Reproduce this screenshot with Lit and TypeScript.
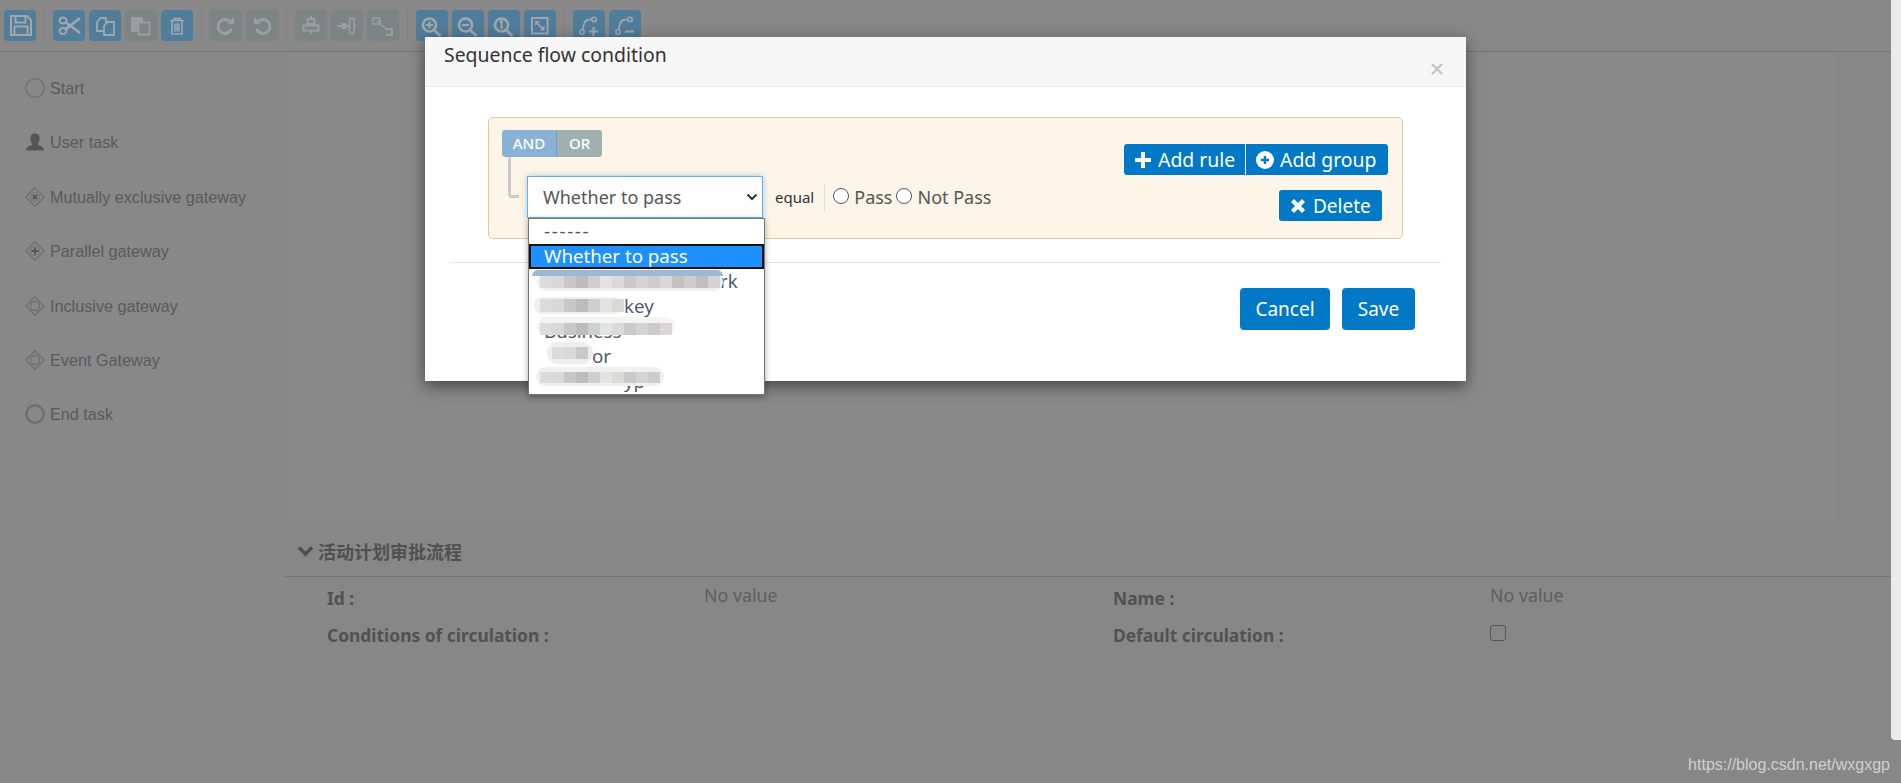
import { LitElement, html, css, svg } from "lit";
import { customElement } from "lit/decorators.js";

const lens = svg`<circle cx="13.500" cy="15" r="6.500" fill="none" stroke="currentColor" stroke-width="2.600"/><path d="M18.500 20.500l6 5.500" stroke="currentColor" stroke-width="3"/>`;
const nodes = svg`<circle cx="9" cy="22" r="2.200" fill="none" stroke="currentColor" stroke-width="1.600"/><circle cx="21" cy="9.500" r="2.200" fill="none" stroke="currentColor" stroke-width="1.600"/><path d="M9.500 19.800l1.500-5.800q.7-3.600 4-4.200l3.800-.3" fill="none" stroke="currentColor" stroke-width="1.700"/>`;
const ic: Record<string, unknown> = {
  save: svg`<path d="M7 6h16l4 4v15H7z" fill="none" stroke="currentColor" stroke-width="2"/><path d="M11.500 6v6.500h10V6M10.500 25v-8.500h13V25" fill="none" stroke="currentColor" stroke-width="2"/>`,
  cut: svg`<ellipse cx="10" cy="10.500" rx="3.500" ry="3" fill="none" stroke="currentColor" stroke-width="2"/><ellipse cx="10" cy="21" rx="3.500" ry="3" fill="none" stroke="currentColor" stroke-width="2"/><path d="M13 12.500l14 10.500M13 19l14-11" stroke="currentColor" stroke-width="2.800"/>`,
  copy: svg`<path d="M8 12l3.500-4H17v5M8 12v9h6" fill="none" stroke="currentColor" stroke-width="1.800"/><path d="M15 16l3.500-4H25v13H15z" fill="none" stroke="currentColor" stroke-width="1.800"/>`,
  paste: svg`<path d="M6 7h12v15H6z" fill="currentColor"/><path d="M13.500 12.500h11v12h-11z" fill="#7c8485" stroke="currentColor" stroke-width="1.800"/>`,
  trash: svg`<path d="M9.500 10.500h13M13 10.500V8.500h6v2M11 10.500V24h10V10.500M14 13.500v8M16 13.500v8M18 13.500v8" fill="none" stroke="currentColor" stroke-width="1.600"/>`,
  redo: svg`<path d="M21.500 19a7 7 0 1 1-1.500-7.500" fill="none" stroke="currentColor" stroke-width="3"/><path d="M17 14h7V7z" fill="currentColor"/>`,
  undo: svg`<path d="M10.500 19a7 7 0 1 0 1.500-7.500" fill="none" stroke="currentColor" stroke-width="3"/><path d="M15 14H8V7z" fill="currentColor"/>`,
  alignv: svg`<path d="M16 6v18" stroke="currentColor" stroke-width="2"/><path d="M12.500 9h7v5h-7zM8.500 15.500h15v5h-15z" fill="#7c8485" stroke="currentColor" stroke-width="2"/>`,
  alignh: svg`<path d="M6 16h19" stroke="currentColor" stroke-width="2"/><path d="M10.500 13h5v6h-5z" fill="currentColor"/><path d="M18.500 8.500h4.500v15h-4.500z" fill="#7c8485" stroke="currentColor" stroke-width="1.600"/>`,
  size: svg`<path d="M6 8h6.500v6H6z" fill="none" stroke="currentColor" stroke-width="1.600"/><path d="M19 19h6v6h-6" fill="none" stroke="currentColor" stroke-width="2"/><path d="M12 13l8 7M9.500 11.500l4 0-1.500 3.500" fill="none" stroke="currentColor" stroke-width="1.500"/>`,
  zin: svg`${lens}<path d="M10 15h7M13.500 11.500v7" stroke="currentColor" stroke-width="2.200"/>`,
  zout: svg`${lens}<path d="M10 15h7" stroke="currentColor" stroke-width="2.200"/>`,
  zone: svg`${lens}<path d="M11.500 12.500l2.200-1.300V19" fill="none" stroke="currentColor" stroke-width="2"/>`,
  fit: svg`<path d="M8 8h15.500v15.500H8z" fill="none" stroke="currentColor" stroke-width="2"/><path d="M13 13l6 6" stroke="currentColor" stroke-width="1.600"/><path d="M11 11h5l-5 5zM20.500 20.500h-5l5-5z" fill="currentColor"/>`,
  addp: svg`${nodes}<path d="M16 21.500h9M20.500 17v9" stroke="currentColor" stroke-width="2.200"/>`,
  delp: svg`${nodes}<path d="M16 21.500h9" stroke="currentColor" stroke-width="2.200"/>`,
};

type Tool = [string, boolean];
const groups: Tool[][] = [
  [["save", true]],
  [["cut", true], ["copy", true], ["paste", false], ["trash", true]],
  [["redo", false], ["undo", false]],
  [["alignv", false], ["alignh", false], ["size", false]],
  [["zin", true], ["zout", true], ["zone", true], ["fit", true]],
  [["addp", true], ["delp", true]],
];

const diamond = (inner: unknown) => svg`<path d="M10 .8l9.200 9.200-9.200 9.200L.8 10z" fill="none" stroke="currentColor" stroke-width="1.200"/>${inner}`;
const palette: [string, unknown][] = [
  ["Start", svg`<circle cx="10" cy="10" r="9.200" fill="none" stroke="currentColor" stroke-width="1.100"/>`],
  ["User task", svg`<path d="M1.200 18.500c0-3 1-4 5.800-5.500v-1.500C5.500 10 5.500 7.500 5.500 5.500 5.500 3 7.500 1.500 10 1.500s4.500 1.500 4.500 4c0 2 0 4.500-1.500 6V13c4.800 1.500 5.800 2.500 5.800 5.500z" fill="#555"/>`],
  ["Mutually exclusive gateway", diamond(svg`<circle cx="10" cy="10" r="4.600" fill="none" stroke="currentColor" stroke-width=".8"/><path d="M8 8l4 4M12 8l-4 4" stroke="#555" stroke-width="1.800"/>`)],
  ["Parallel gateway", diamond(svg`<circle cx="10" cy="10" r="4.600" fill="none" stroke="currentColor" stroke-width=".8"/><path d="M6.500 10h7M10 6.500v7" stroke="#555" stroke-width="1.800"/>`)],
  ["Inclusive gateway", diamond(svg`<circle cx="10" cy="10" r="4.500" fill="none" stroke="currentColor" stroke-width="1.300"/>`)],
  ["Event Gateway", diamond(svg`<circle cx="10" cy="10" r="4.500" fill="none" stroke="currentColor" stroke-width="1.300"/>`)],
  ["End task", svg`<circle cx="10" cy="10" r="8.700" fill="none" stroke="currentColor" stroke-width="2.400"/>`],
];

const mosaics = [
  { l: 11, t: 57, n: 15, h: 12, strip: true, halo: "0 0 0 3px #f0f0f0" },
  { l: 11, t: 80, n: 7, h: 13, strip: false, halo: "-4px 0 0 2px #f0f0f0" },
  { l: 11, t: 104, n: 11, h: 12, strip: false, halo: "0 -3px 0 3px #f4f4f4" },
  { l: 23, t: 128, n: 3, h: 12, strip: false, halo: "0 0 0 5px #eeeeee" },
  { l: 11, t: 153, n: 10, h: 11, strip: false, halo: "0 -1px 0 4px #f0f0f0" },
];
const shades = ["#dcdcdc", "#d9d9d7", "#c9c8c8", "#bdbcbd", "#cfcfce", "#e2e4e4", "#dcdad8", "#cbc9ca", "#d3d4d4", "#cccdcb", "#d9d7d7", "#c2c2c0", "#cdcdcc", "#c0bfbf", "#d3d3d5"];

@customElement("app-root")
export class AppRoot extends LitElement {
  static styles = css`
    :host { display: block; position: relative; width: 1901px; height: 783px; overflow: hidden; background: #888; color: #555;
      font-family: "Noto Sans", "Noto Sans CJK SC", sans-serif; }
    .page { display: flex; height: 783px; }
    .content { flex: 1; min-width: 0; display: flex; flex-direction: column; }
    .scroll { width: 10px; flex: none; height: 740px; background: #ebebeb; border-bottom-left-radius: 4px; }
    .toolbar { height: 52px; flex: none; box-sizing: border-box; border-bottom: 1px solid #757575; padding: 10px 0 0 4px; display: flex; align-items: flex-start; }
    .group { display: flex; gap: 4px; }
    .sep { width: 1px; height: 30px; background: #7f7f7f; margin: 0 8px; }
    .tool { width: 32px; height: 31px; border-radius: 4px; display: flex; background: #507d9b; color: #a0a8ad; }
    .tool.off { background: #7c8485; color: #9a9e9e; }
    .tool svg { width: 32px; height: 31px; }
    .body { flex: 1; display: flex; min-height: 0; }
    .side { width: 285px; flex: none; box-sizing: border-box; border-right: 1px solid #858585; padding-top: 24px; font: 16.200px "Liberation Sans", Arial, sans-serif; }
    .pal { height: 54.400px; display: flex; align-items: flex-start; gap: 5px; padding-left: 25px; line-height: 20px; color: #5a5a5a; }
    .pal span { margin-top: 2px; }
    .pal svg { width: 20px; height: 20px; color: #6e6e6e; margin-top: 2px; flex: none; }
    .main { flex: 1; display: flex; flex-direction: column; }
    .canvas { height: 474px; flex: none; width: 1554px; box-sizing: border-box; border-right: 1px solid #848484; background: #898989; }
    .panel { flex: 1; background: #878787; }
    .panel-head { height: 51px; box-sizing: border-box; border-bottom: 1px solid #757575; display: flex; align-items: center; gap: 4px; padding: 0 0 0 12px; font-size: 18px; font-weight: 700; color: #505050; }
    .panel-head svg { width: 17px; height: 12px; }
    .fields { display: grid; grid-template-columns: 377px 409px 377px 1fr; grid-auto-rows: 38px; padding: 2px 0 0 42px; line-height: 38px; }
    .lab { font-weight: 700; color: #525252; font-size: 17.400px; }
    .lab.second { margin-top: -1px; }
    .val { color: #5e5e5e; font-size: 17.800px; margin-top: -3px; }
    .check { width: 14px; height: 14px; border: 1px solid #555; border-radius: 3px; margin-top: 8px; }
    .mark { position: absolute; right: 11px; top: 756px; font: 16px "Liberation Sans", Arial, sans-serif; color: #d0d0d0; line-height: 18px; }

    .modal { position: absolute; left: 425px; top: 37px; width: 1041px; height: 344px; background: #fff; box-shadow: 0 5px 15px rgba(0,0,0,.5); display: flex; flex-direction: column; color: #555; }
    .m-head { height: 50px; flex: none; box-sizing: border-box; background: #f7f7f7; border-bottom: 1px solid #e3edf9; display: flex; justify-content: space-between; padding: 4px 22px 0 19px; font-size: 19.400px; color: #333; line-height: 28px; }
    .close { width: 14px; height: 14px; margin-top: 21px; color: #c4c4c4; }
    .m-body { flex: 1; padding: 30px 63px 0; }
    .rules { height: 122px; box-sizing: border-box; background: #fdf5e7; border: 1px solid #dfcb97; border-radius: 5px; display: flex; justify-content: space-between; padding: 12px 14px 0 13px; }
    .left { position: relative; display: flex; flex-direction: column; }
    .seg { display: flex; width: 100px; height: 27px; border-radius: 3px; overflow: hidden; color: #fff; font-size: 15px; font-weight: 500; line-height: 27px; text-align: center; }
    .and { width: 55px; background: #89b2d6; border-right: 1px solid #6fa0cb; box-sizing: border-box; }
    .or { flex: 1; background: #9eb1b0; }
    .link { position: absolute; left: 6px; top: 27px; width: 11px; height: 41px; box-sizing: border-box; border-left: 3px solid #ccc; border-bottom: 3px solid #ccc; border-bottom-left-radius: 4px; }
    .cond { display: flex; align-items: center; margin: 19px 0 0 25px; height: 42px; }
    .select { width: 236px; height: 42px; box-sizing: border-box; border: 1px solid #66afe9; box-shadow: 0 0 6px rgba(102,175,233,.6); display: flex; align-items: center; justify-content: space-between; padding: 0 4px 0 15px; font-size: 18px; color: #555; background: #fff; }
    .select svg { width: 12px; height: 8px; }
    .op { font-size: 15px; color: #333; margin-left: 12px; }
    .vsep { width: 1px; height: 27px; background: #ddd; margin: 0 8px 0 10px; }
    .radio { width: 14px; height: 14px; border: 1px solid #555; border-radius: 50%; flex: none; background: #fff; margin-top: -2px; }
    .rl { font-size: 18px; margin: 0 4px 0 5px; color: #555; }
    .actions { display: flex; flex-direction: column; align-items: flex-end; }
    .btns { display: flex; margin-top: 14px; }
    .btn { display: flex; align-items: center; gap: 6px; height: 31px; box-sizing: border-box; background: #0279c6; color: #fff; font-size: 19.400px; padding: 0 0 0 10px; border-radius: 3px; white-space: nowrap; }
    .btn svg { width: 18px; height: 18px; flex: none; }
    .btns .btn:first-child { width: 121px; border-radius: 3px 0 0 3px; }
    .btns .btn:last-child { width: 142px; margin-left: 1px; border-radius: 0 3px 3px 0; }
    .del { width: 103px; margin: 15px 6px 0 0; font-size: 19px; }
    .hr { height: 1px; background: #e5e5e5; margin: 23px -38px 0 -38px; }
    .foot { display: flex; justify-content: flex-end; gap: 12px; margin: 25px -12px 0 0; }
    .fbtn { height: 42px; border-radius: 4px; background: #0279c6; color: #fff; font-size: 19px; display: flex; align-items: center; justify-content: center; }
    .cancel { width: 90px; } .savebtn { width: 73px; }

    .drop { position: absolute; left: 528px; top: 218px; width: 237px; height: 177px; box-sizing: border-box; background: #fff; border: 1px solid #767676; box-shadow: 0 2px 6px rgba(0,0,0,.35); font-size: 18.700px; color: #4d5a6b; z-index: 2; overflow: hidden; }
    .opt { height: 25px; line-height: 23px; padding-left: 15px; white-space: nowrap; }
    .opt.dash { letter-spacing: 1.700px; color: #555; }
    .opt.sel { background: #1e90ff; color: #fff; outline: 2px solid #111; outline-offset: -2px; }
    .tail-rk { padding-left: 176px; }
    .tail-key { padding-left: 80px; }
    .tail-or { padding-left: 48px; }
    .blur { position: absolute; display: flex; border-radius: 6px; }
    .blur i { display: block; width: 12px; }
    .strip { position: absolute; left: -8px; top: -6px; height: 6px; width: 191px; background: #9db8d5; border-radius: 6px 6px 0 0; }
  `;

  render() {
    return html`
      <div class="page">
        <div class="content">
          <div class="toolbar">
            ${groups.map((g, i) => html`
              ${i ? html`<div class="sep"></div>` : ""}
              <div class="group">${g.map(([n, on]) => html`<div class="tool ${on ? "" : "off"}"><svg viewBox="0 0 32 31">${ic[n]}</svg></div>`)}</div>
            `)}
          </div>
          <div class="body">
            <div class="side">
              ${palette.map(([t, s]) => html`<div class="pal"><svg viewBox="0 0 20 20">${s}</svg><span>${t}</span></div>`)}
            </div>
            <div class="main">
              <div class="canvas"></div>
              <div class="panel">
                <div class="panel-head"><svg viewBox="0 0 17 12"><path d="M2 2.500l6.500 6.500L15 2.500" fill="none" stroke="currentColor" stroke-width="3.500"/></svg>活动计划审批流程</div>
                <div class="fields">
                  <div class="lab">Id :</div><div class="val">No value</div><div class="lab">Name :</div><div class="val">No value</div>
                  <div class="lab second">Conditions of circulation :</div><div></div><div class="lab second">Default circulation :</div><div><div class="check"></div></div>
                </div>
              </div>
            </div>
          </div>
        </div>
        <div class="scroll"></div>
      </div>
      <div class="mark">https://blog.csdn.net/wxgxgp</div>
      <div class="modal">
        <div class="m-head"><span>Sequence flow condition</span>
          <svg class="close" viewBox="0 0 14 14"><path d="M2 2l10 10M12 2L2 12" stroke="currentColor" stroke-width="2.400"/></svg></div>
        <div class="m-body">
          <div class="rules">
            <div class="left">
              <div class="seg"><span class="and">AND</span><span class="or">OR</span></div>
              <div class="link"></div>
              <div class="cond">
                <div class="select"><span>Whether to pass</span><svg viewBox="0 0 12 8"><path d="M1.500 1.500L6 6l4.500-4.500" fill="none" stroke="#333" stroke-width="2"/></svg></div>
                <span class="op">equal</span><span class="vsep"></span>
                <span class="radio"></span><span class="rl">Pass</span><span class="radio"></span><span class="rl">Not Pass</span>
              </div>
            </div>
            <div class="actions">
              <div class="btns">
                <div class="btn"><svg viewBox="0 0 18 18"><path d="M7 1h4v6h6v4h-6v6H7v-6H1V7h6z" fill="#fff"/></svg>Add rule</div>
                <div class="btn"><svg viewBox="0 0 18 18"><circle cx="9" cy="9" r="9" fill="#fff"/><path d="M9 5v8M5 9h8" stroke="#0279c6" stroke-width="2.400"/></svg>Add group</div>
              </div>
              <div class="btn del"><svg viewBox="0 0 18 18"><path d="M2 5l3-3 4 4 4-4 3 3-4 4 4 4-3 3-4-4-4 4-3-3 4-4z" fill="#fff"/></svg>Delete</div>
            </div>
          </div>
          <div class="hr"></div>
          <div class="foot"><div class="fbtn cancel">Cancel</div><div class="fbtn savebtn">Save</div></div>
        </div>
      </div>
      <div class="drop">
        <div class="opt dash">------</div>
        <div class="opt sel">Whether to pass</div>
        <div class="opt"><span class="tail-rk">rk</span></div>
        <div class="opt"><span class="tail-key">key</span></div>
        <div class="opt">Business</div>
        <div class="opt"><span class="tail-or">or</span></div>
        <div class="opt"><span class="tail-key">yp</span></div>
        ${mosaics.map((m) => html`<div class="blur" style="left:${m.l}px;top:${m.t}px;box-shadow:${m.halo}">
          ${m.strip ? html`<div class="strip"></div>` : ""}
          ${Array.from({ length: m.n }, (_, i) => html`<i style="height:${m.h}px;background:${shades[i % shades.length]}"></i>`)}
        </div>`)}
      </div>
    `;
  }
}
